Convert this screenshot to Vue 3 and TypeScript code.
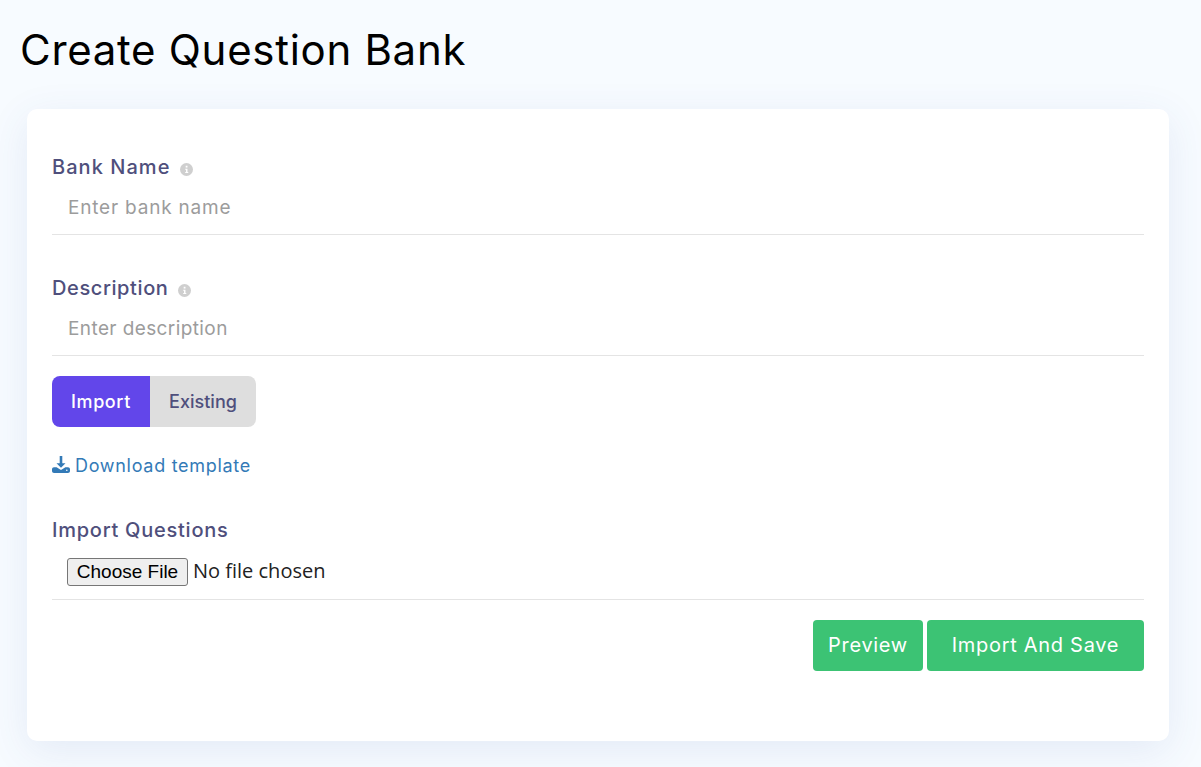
<script setup lang="ts">
import { ref } from 'vue'

const mode = ref<'import' | 'existing'>('import')
const bankName = ref('')
const description = ref('')
</script>

<template>
  <div class="page">
    <h1 class="page-title">Create Question Bank</h1>

    <div class="card">
      <div class="field">
        <label class="field-label bank">
          Bank Name
          <svg class="info-icon" viewBox="0 0 16 16">
            <circle cx="8" cy="8" r="8" fill="#cfcfcf" />
            <rect x="7" y="3.4" width="2.2" height="2.2" fill="#fff" />
            <path d="M6.4 7h2.8v4.2h1v1.2H6.4v-1.2h1V8.2h-1z" fill="#fff" />
          </svg>
        </label>
        <input v-model="bankName" class="text-input bank" type="text" placeholder="Enter bank name" />
      </div>

      <div class="field field-second">
        <label class="field-label desc">
          Description
          <svg class="info-icon" viewBox="0 0 16 16">
            <circle cx="8" cy="8" r="8" fill="#cfcfcf" />
            <rect x="7" y="3.4" width="2.2" height="2.2" fill="#fff" />
            <path d="M6.4 7h2.8v4.2h1v1.2H6.4v-1.2h1V8.2h-1z" fill="#fff" />
          </svg>
        </label>
        <input v-model="description" class="text-input desc" type="text" placeholder="Enter description" />
      </div>

      <div class="toggle">
        <button class="toggle-btn import" :class="{ active: mode === 'import' }" @click="mode = 'import'">Import</button>
        <button class="toggle-btn existing" :class="{ active: mode === 'existing' }" @click="mode = 'existing'">Existing</button>
      </div>

      <a class="download-link" href="#">
        <svg class="download-icon" viewBox="0 0 18 17">
          <path d="M7.700 0h2.600v7.200h3.200L9 11.800 4.500 7.200h3.200z" fill="#337ab7" />
          <path d="M0 13.200C0 12 .9 11.200 2 11.200h2.600L9 14l4.400-2.800H16c1.100 0 2 .8 2 2V15c0 1.200-.9 2-2 2H2c-1.100 0-2-.8-2-2z" fill="#337ab7" />
          <circle cx="14.800" cy="14.200" r="0.8" fill="#fff" />
        </svg>
        Download template
      </a>

      <div class="field import-field">
        <label class="field-label">Import Questions</label>
        <div class="file-row">
          <input class="file-input" type="file" />
        </div>
      </div>

      <div class="actions">
        <button class="action-btn preview">Preview</button>
        <button class="action-btn save">Import And Save</button>
      </div>
    </div>
  </div>
</template>

<style scoped>
.page {
  width: 100%;
  height: 767px;
  box-sizing: border-box;
  overflow: hidden;
  background-color: #f7fbff;
  padding: 21px 32px 0 27px;
  font-family: Inter, "Open Sans", sans-serif;
}

.page-title {
  margin: 0 0 30px -7px;
  font-size: 42px;
  line-height: 58px;
  font-weight: 400;
  letter-spacing: 0.7px;
  color: #000;
  white-space: nowrap;
}

.card {
  height: 632px;
  box-sizing: border-box;
  background-color: #fff;
  border-radius: 10px;
  padding: 45px 25px 0;
  box-shadow: 0 10px 40px rgba(60, 90, 170, 0.1);
}

.field-label {
  display: flex;
  align-items: center;
  height: 27px;
  box-sizing: border-box;
  padding-bottom: 2px;
  font-size: 20px;
  font-weight: 500;
  letter-spacing: 0.75px;
  color: #4f4f7c;
  white-space: nowrap;
}

.field-label.bank {
  letter-spacing: 1.05px;
}

.field-label.desc {
  letter-spacing: 0.6px;
}

.info-icon {
  width: 13px;
  height: 13px;
  margin: 5px 0 0 10px;
}

.text-input {
  display: block;
  width: 100%;
  height: 54px;
  box-sizing: border-box;
  padding: 0 16px;
  border: none;
  border-bottom: 1px solid #e4e4e4;
  outline: none;
  background: transparent;
  font-family: inherit;
  font-size: 19px;
  color: #333;
}

.text-input.bank {
  letter-spacing: 0.8px;
}

.text-input.desc {
  letter-spacing: 0.4px;
}

.text-input::placeholder {
  color: #9c9c9c;
  opacity: 1;
}

.field-second {
  margin-top: 40px;
}

.toggle {
  display: flex;
  width: 204px;
  height: 51px;
  margin-top: 20px;
}

.toggle-btn {
  border: none;
  padding: 0;
  font-family: inherit;
  font-size: 18px;
  font-weight: 500;
  background-color: #dedede;
  color: #4f4f7c;
  cursor: pointer;
}

.toggle-btn.active {
  background-color: #6246ea;
  color: #fff;
  letter-spacing: 0.6px;
}

.toggle-btn.import {
  width: 98px;
  border-radius: 8px 0 0 8px;
}

.toggle-btn.existing {
  width: 106px;
  border-radius: 0 8px 8px 0;
}

.download-link {
  display: flex;
  align-items: center;
  gap: 5px;
  height: 26px;
  margin-top: 25px;
  font-size: 18px;
  letter-spacing: 0.7px;
  color: #337ab7;
  text-decoration: none;
  white-space: nowrap;
}

.download-icon {
  width: 18px;
  height: 17px;
  margin-top: -2px;
}

.import-field {
  margin-top: 39px;
}

.file-row {
  height: 56px;
  box-sizing: border-box;
  padding: 0 15px;
  display: flex;
  align-items: center;
  border-bottom: 1px solid #e4e4e4;
}

.file-input {
  font-family: "Open Sans", sans-serif;
  font-size: 20px;
  color: #222;
  margin-top: -1px;
}

.file-input::file-selector-button {
  font-family: "Liberation Sans", Arial, sans-serif;
  font-size: 19px;
  height: 28px;
  width: 121px;
  padding: 0;
  margin-right: 5px;
  color: #000;
  background-color: #efefef;
  border: 1px solid #767676;
  border-radius: 3px;
}

.actions {
  display: flex;
  justify-content: flex-end;
  gap: 4px;
  margin-top: 20px;
}

.action-btn {
  height: 51px;
  border: none;
  border-radius: 4px;
  background-color: #3cc374;
  color: #fff;
  font-family: inherit;
  font-size: 20px;
  font-weight: 400;
  letter-spacing: 0.7px;
  padding: 0 0 2px;
  cursor: pointer;
}

.action-btn.preview {
  width: 110px;
}

.action-btn.save {
  width: 217px;
}
</style>

<style>
html,
body {
  margin: 0;
  overflow: hidden;
}
</style>
